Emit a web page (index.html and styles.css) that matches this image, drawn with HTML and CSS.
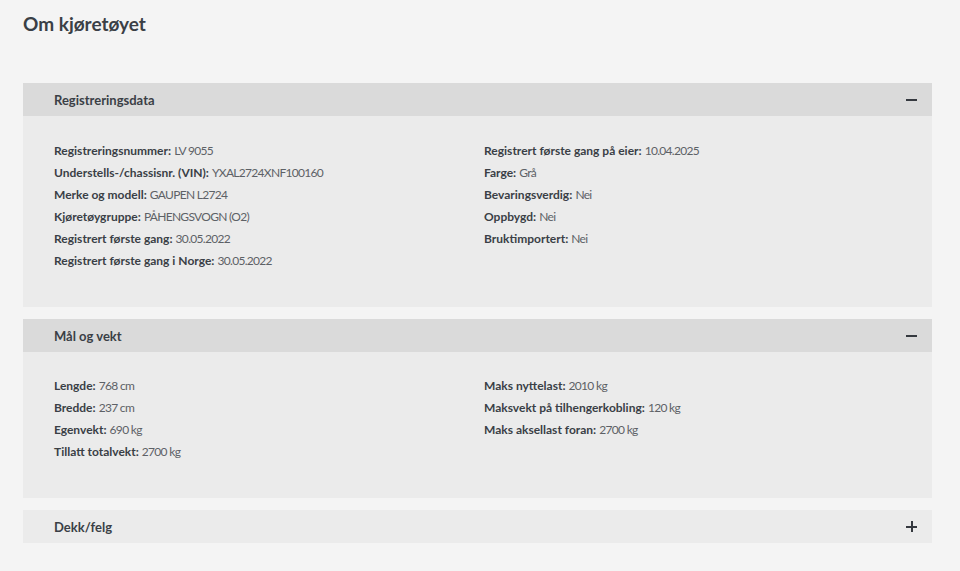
FILE: index.html
```html
<!DOCTYPE html>
<html lang="no">
<head>
<meta charset="utf-8">
<title>Om kjøretøyet</title>
<link rel="stylesheet" href="styles.css">
</head>
<body>
<main class="page">
  <h1 class="title">Om kjøretøyet</h1>

  <section class="panel open">
    <div class="panel-head">
      <span class="panel-title">Registreringsdata</span>
      <span class="toggle minus"></span>
    </div>
    <div class="panel-body first">
      <ul class="col">
        <li><b>Registreringsnummer:</b> <span>LV 9055</span></li>
        <li><b>Understells-/chassisnr. (VIN):</b> <span>YXAL2724XNF100160</span></li>
        <li><b>Merke og modell:</b> <span>GAUPEN L2724</span></li>
        <li><b>Kjøretøygruppe:</b> <span>PÅHENGSVOGN (O2)</span></li>
        <li><b>Registrert første gang:</b> <span>30.05.2022</span></li>
        <li><b>Registrert første gang i Norge:</b> <span>30.05.2022</span></li>
      </ul>
      <ul class="col">
        <li><b>Registrert første gang på eier:</b> <span>10.04.2025</span></li>
        <li><b>Farge:</b> <span>Grå</span></li>
        <li><b>Bevaringsverdig:</b> <span>Nei</span></li>
        <li><b>Oppbygd:</b> <span>Nei</span></li>
        <li><b>Bruktimportert:</b> <span>Nei</span></li>
      </ul>
    </div>
  </section>

  <section class="panel open">
    <div class="panel-head">
      <span class="panel-title">Mål og vekt</span>
      <span class="toggle minus"></span>
    </div>
    <div class="panel-body">
      <ul class="col">
        <li><b>Lengde:</b> <span>768 cm</span></li>
        <li><b>Bredde:</b> <span>237 cm</span></li>
        <li><b>Egenvekt:</b> <span>690 kg</span></li>
        <li><b>Tillatt totalvekt:</b> <span>2700 kg</span></li>
      </ul>
      <ul class="col">
        <li><b>Maks nyttelast:</b> <span>2010 kg</span></li>
        <li><b>Maksvekt på tilhengerkobling:</b> <span>120 kg</span></li>
        <li><b>Maks aksellast foran:</b> <span>2700 kg</span></li>
      </ul>
    </div>
  </section>

  <section class="panel closed">
    <div class="panel-head">
      <span class="panel-title">Dekk/felg</span>
      <span class="toggle plus"></span>
    </div>
  </section>
</main>
</body>
</html>
```
FILE: styles.css
```css
* { box-sizing: border-box; }
html, body {
  margin: 0;
  background: #f4f4f4;
}
body {
  font-family: Lato, "Open Sans", Arial, sans-serif;
  color: #3c4047;
}
.page {
  padding: 12px 28px 20px 23px;
}
.title {
  margin: 0 0 47px 0;
  font-size: 19px;
  line-height: 24px;
  font-weight: 700;
  color: #3a3f46;
}
.panel {
  margin-bottom: 12px;
}
.panel-head {
  height: 33px;
  display: flex;
  align-items: center;
  justify-content: space-between;
  padding: 0 15px 0 31px;
  background: #dadada;
}
.panel.closed .panel-head {
  background: #ebebeb;
}
.panel-title {
  font-size: 13px;
  font-weight: 700;
  color: #3a3f46;
}
.toggle {
  width: 11px;
  height: 11px;
  position: relative;
}
.toggle::before,
.toggle::after {
  content: "";
  position: absolute;
  background: #35393f;
}
.toggle::before {
  left: 0;
  right: 0;
  top: 4.5px;
  height: 2px;
}
.plus::after {
  top: 0;
  bottom: 0;
  left: 4.5px;
  width: 2px;
}
.panel-body {
  background: #ebebeb;
  display: grid;
  grid-template-columns: 1fr 1fr;
  column-gap: 13px;
  padding: 23px 31px 35px 31px;
}
.panel-body.first {
  padding-top: 24px;
}
.col {
  list-style: none;
  margin: 0;
  padding: 0;
}
.col li {
  font-size: 12px;
  line-height: 22px;
  color: #5d6166;
  white-space: nowrap;
}
.col b {
  font-weight: 700;
  color: #3a3f46;
}
.col span {
  font-weight: 400;
  letter-spacing: -0.7px;
}
```
